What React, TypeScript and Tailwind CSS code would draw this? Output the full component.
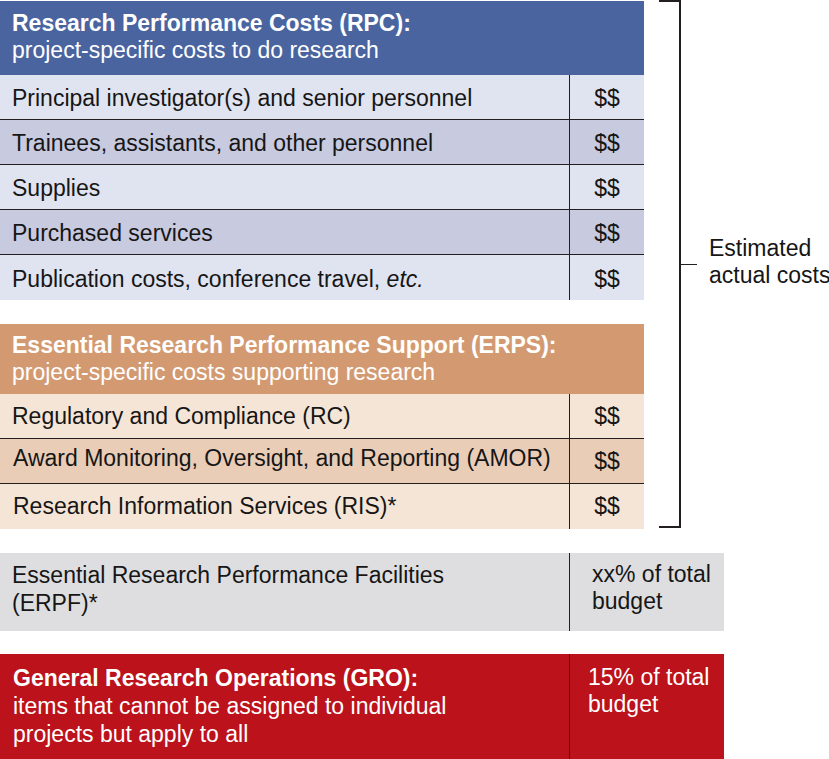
import React from "react";

type Row = { label: React.ReactNode; pad?: string };

const rpcRows: Row[] = [
  { label: "Principal investigator(s) and senior personnel" },
  { label: "Trainees, assistants, and other personnel" },
  { label: "Supplies" },
  { label: "Purchased services" },
  {
    label: (
      <>
        Publication costs, conference travel, <em>etc.</em>
      </>
    ),
  },
];

const erpsRows: Row[] = [
  { label: "Regulatory and Compliance (RC)", pad: "pl-3" },
  { label: "Award Monitoring, Oversight, and Reporting (AMOR)", pad: "pl-[13px] pb-[5px]" },
  { label: "Research Information Services (RIS)*", pad: "pl-[13px]" },
];

function CostRow({ row, bg, last, textPad }: { row: Row; bg: string; last: boolean; textPad: string }) {
  return (
    <div className={`flex h-[45px] ${bg} ${last ? "" : "border-b border-[#231f20]"}`}>
      <div className={`flex w-[570px] items-center border-r border-[#231f20] ${textPad} ${row.pad ?? "pl-3"}`}>
        <span>{row.label}</span>
      </div>
      <div className={`flex flex-1 items-center justify-center ${textPad}`}>$$</div>
    </div>
  );
}

export default function App() {
  return (
    <div
      className="relative h-[759px] w-[829px] overflow-hidden bg-white text-[23px] leading-[27px] text-[#161616]"
      style={{ fontFamily: '"Liberation Sans", Arial, sans-serif' }}
    >
      <div className="flex">
        {/* tables under the bracket */}
        <div className="mt-px flex w-[644px] shrink-0 flex-col">
          <div className="h-[74px] bg-[#4a64a0] pl-3 pt-[9px] text-white">
            <div className="font-bold">Research Performance Costs (RPC):</div>
            <div>project-specific costs to do research</div>
          </div>
          {rpcRows.map((r, i) => (
            <CostRow
              key={i}
              row={r}
              bg={i % 2 === 0 ? "bg-[#e0e3f0]" : "bg-[#c8cae0]"}
              last={i === rpcRows.length - 1}
              textPad="pt-[3px]"
            />
          ))}

          <div className="mt-[24px] h-[70px] bg-[#d39a72] pl-3 pt-[8px] text-white">
            <div className="font-bold">Essential Research Performance Support (ERPS):</div>
            <div>project-specific costs supporting research</div>
          </div>
          {erpsRows.map((r, i) => (
            <CostRow
              key={i}
              row={r}
              bg={i % 2 === 0 ? "bg-[#f5e5d6]" : "bg-[#eacdb7]"}
              last={i === erpsRows.length - 1}
              textPad=""
            />
          ))}
        </div>

        {/* bracket */}
        <div className="ml-[15px] h-[528px] w-[22px] shrink-0 border-y-2 border-r-2 border-[#231f20]" />
        <div className="flex h-[528px] items-center">
          <div className="h-px w-[16px] shrink-0 bg-[#231f20]" />
          <div className="mb-[4px] ml-[12px] whitespace-nowrap">
            Estimated
            <br />
            actual costs
          </div>
        </div>
      </div>

      {/* facilities */}
      <div className="mt-[24px] flex h-[78px] w-[724px] bg-[#dedee0] leading-[28px]">
        <div className="w-[570px] border-r border-[#231f20] pl-3 pt-[8px]">
          Essential Research Performance Facilities
          <br />
          (ERPF)*
        </div>
        <div className="flex-1 pl-[22px] pt-[8px] leading-[27px]">
          xx% of total
          <br />
          budget
        </div>
      </div>

      {/* general operations */}
      <div className="mt-[23px] flex h-[105px] w-[724px] bg-[#bb121b] leading-[28px] text-white">
        <div className="w-[570px] border-r border-[#231f20] pl-[13px] pt-[10px]">
          <div className="font-bold">General Research Operations (GRO):</div>
          <div>items that cannot be assigned to individual</div>
          <div>projects but apply to all</div>
        </div>
        <div className="flex-1 pl-[18px] pt-[10px] leading-[27px]">
          15% of total
          <br />
          budget
        </div>
      </div>
    </div>
  );
}
